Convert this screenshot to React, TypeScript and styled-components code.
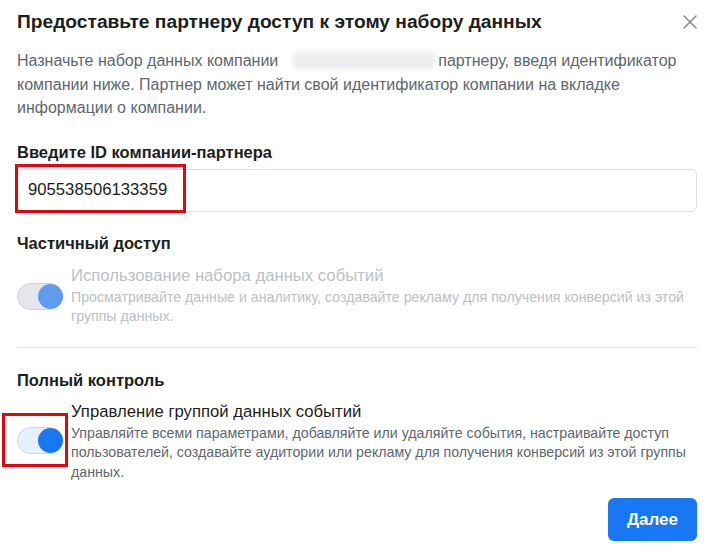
import React, { useState } from 'react';
import styled, { createGlobalStyle } from 'styled-components';

const GlobalStyle = createGlobalStyle`
  html, body {
    margin: 0;
    padding: 0;
    background: #fff;
  }
  body {
    font-family: "Liberation Sans", Arial, sans-serif;
    -webkit-font-smoothing: antialiased;
  }
`;

const Dialog = styled.div`
  width: 714px;
  height: 552px;
  box-sizing: border-box;
  padding: 8px 17px 0 17px;
  background: #fff;
  display: flex;
  flex-direction: column;
`;

const Header = styled.div`
  display: flex;
  align-items: center;
  justify-content: space-between;
  height: 28px;
`;

const Title = styled.h2`
  margin: 0;
  font-size: 19.2px;
  font-weight: 700;
  color: #1c1e21;
`;

const CloseButton = styled.button`
  border: 0;
  background: none;
  padding: 0;
  margin-right: -2px;
  width: 18px;
  height: 18px;
  display: flex;
  align-items: center;
  justify-content: center;
  cursor: pointer;
`;

const Intro = styled.p`
  margin: 13px 0 0;
  font-size: 16px;
  line-height: 23.5px;
  color: #606770;
`;

// company name hidden behind a soft grey smear
const Redacted = styled.span`
  display: inline-block;
  width: 142px;
  height: 17px;
  margin: 0 3px 0 15px;
  vertical-align: -3px;
  border-radius: 3px;
  background: #eceef0;
  filter: blur(2px);
`;

const Label = styled.div<{ $top: number }>`
  margin-top: ${(p) => p.$top}px;
  font-size: 16.5px;
  font-weight: 700;
  color: #1c1e21;
  line-height: 20px;
`;

const Marked = styled.div`
  position: relative;
`;

const Highlight = styled.div<{ $left: number; $top: number; $w: number; $h: number }>`
  position: absolute;
  left: ${(p) => p.$left}px;
  top: ${(p) => p.$top}px;
  width: ${(p) => p.$w}px;
  height: ${(p) => p.$h}px;
  box-sizing: border-box;
  border: 3px solid #e3050f;
  pointer-events: none;
`;

const InputField = styled.input`
  display: block;
  width: 100%;
  height: 43px;
  box-sizing: border-box;
  margin-top: 7px;
  padding: 0 10px;
  border: 1px solid #dddfe2;
  border-radius: 6px;
  font-family: inherit;
  font-size: 16.7px;
  color: #1c1e21;
  outline: none;
`;

const OptionRow = styled.div<{ $top: number }>`
  display: flex;
  align-items: center;
  gap: 8px;
  margin-top: ${(p) => p.$top}px;
`;

const OptionText = styled.div<{ $disabled?: boolean }>`
  flex: 1;
  color: ${(p) => (p.$disabled ? '#bcc0c4' : '#1c1e21')};
`;

const OptionTitle = styled.div`
  font-size: 16.7px;
  line-height: 21px;
`;

const OptionDesc = styled.div<{ $disabled?: boolean }>`
  margin-top: 2px;
  font-size: 14.2px;
  line-height: 19.5px;
  color: ${(p) => (p.$disabled ? '#bcc0c4' : '#606770')};
`;

const Track = styled.button<{ $disabled?: boolean }>`
  position: relative;
  flex: none;
  width: 46px;
  height: 27px;
  padding: 0;
  border-radius: 14px;
  box-sizing: border-box;
  border: 1px solid ${(p) => (p.$disabled ? '#cfd3d8' : '#c8d6ea')};
  background: ${(p) => (p.$disabled ? '#e4e6eb' : '#e7f0fd')};
  cursor: ${(p) => (p.$disabled ? 'default' : 'pointer')};
  margin-top: 2px;
`;

const Knob = styled.span<{ $disabled?: boolean; $on: boolean }>`
  position: absolute;
  top: 0px;
  left: ${(p) => (p.$on ? '20px' : '1px')};
  width: 25px;
  height: 25px;
  border-radius: 50%;
  background: ${(p) => (p.$disabled ? '#5f9bef' : '#1877f2')};
  transition: left 0.15s;
`;

const Divider = styled.hr`
  margin: 20px 0 0;
  border: 0;
  border-top: 1px solid #dadde1;
`;

const Footer = styled.div`
  display: flex;
  justify-content: flex-end;
  margin-top: 16px;
`;

const PrimaryButton = styled.button`
  width: 89px;
  height: 43px;
  border: 0;
  border-radius: 6px;
  background: #1877f2;
  color: #fff;
  font-family: inherit;
  font-size: 17px;
  font-weight: 700;
  cursor: pointer;
`;

const CloseIcon = () => (
  <svg width="14" height="14" viewBox="0 0 14 14">
    <path d="M1 1L13 13M13 1L1 13" stroke="#8a8d91" strokeWidth="1.6" strokeLinecap="round" />
  </svg>
);

type ToggleProps = { on: boolean; disabled?: boolean; onChange?: () => void };

const Toggle = ({ on, disabled, onChange }: ToggleProps) => (
  <Track $disabled={disabled} onClick={disabled ? undefined : onChange} aria-pressed={on}>
    <Knob $disabled={disabled} $on={on} />
  </Track>
);

const App = () => {
  const [partnerId, setPartnerId] = useState('905538506133359');
  const [fullControl, setFullControl] = useState(true);

  return (
    <>
      <GlobalStyle />
      <Dialog>
        <Header>
          <Title>Предоставьте партнеру доступ к этому набору данных</Title>
          <CloseButton aria-label="Закрыть">
            <CloseIcon />
          </CloseButton>
        </Header>

        <Intro>
          Назначьте набор данных компании<Redacted />партнеру, введя идентификатор компании ниже.
          Партнер может найти свой идентификатор компании на вкладке информации о компании.
        </Intro>

        <Label $top={22}>Введите ID компании-партнера</Label>
        <Marked>
          <InputField value={partnerId} onChange={(e) => setPartnerId(e.target.value)} />
          <Highlight $left={-2} $top={2} $w={171} $h={49} />
        </Marked>

        <Label $top={21}>Частичный доступ</Label>
        <OptionRow $top={12}>
          <Toggle on disabled />
          <OptionText $disabled>
            <OptionTitle>Использование набора данных событий</OptionTitle>
            <OptionDesc $disabled>
              Просматривайте данные и аналитику, создавайте рекламу для получения конверсий из этой
              группы данных.
            </OptionDesc>
          </OptionText>
        </OptionRow>

        <Divider />

        <Label $top={22}>Полный контроль</Label>
        <OptionRow $top={11}>
          <Marked>
            <Toggle on={fullControl} onChange={() => setFullControl(!fullControl)} />
            <Highlight $left={-15} $top={-12} $w={66} $h={54} />
          </Marked>
          <OptionText>
            <OptionTitle>Управление группой данных событий</OptionTitle>
            <OptionDesc>
              Управляйте всеми параметрами, добавляйте или удаляйте события, настраивайте доступ
              пользователей, создавайте аудитории или рекламу для получения конверсий из этой группы
              данных.
            </OptionDesc>
          </OptionText>
        </OptionRow>

        <Footer>
          <PrimaryButton>Далее</PrimaryButton>
        </Footer>
      </Dialog>
    </>
  );
};

export default App;
